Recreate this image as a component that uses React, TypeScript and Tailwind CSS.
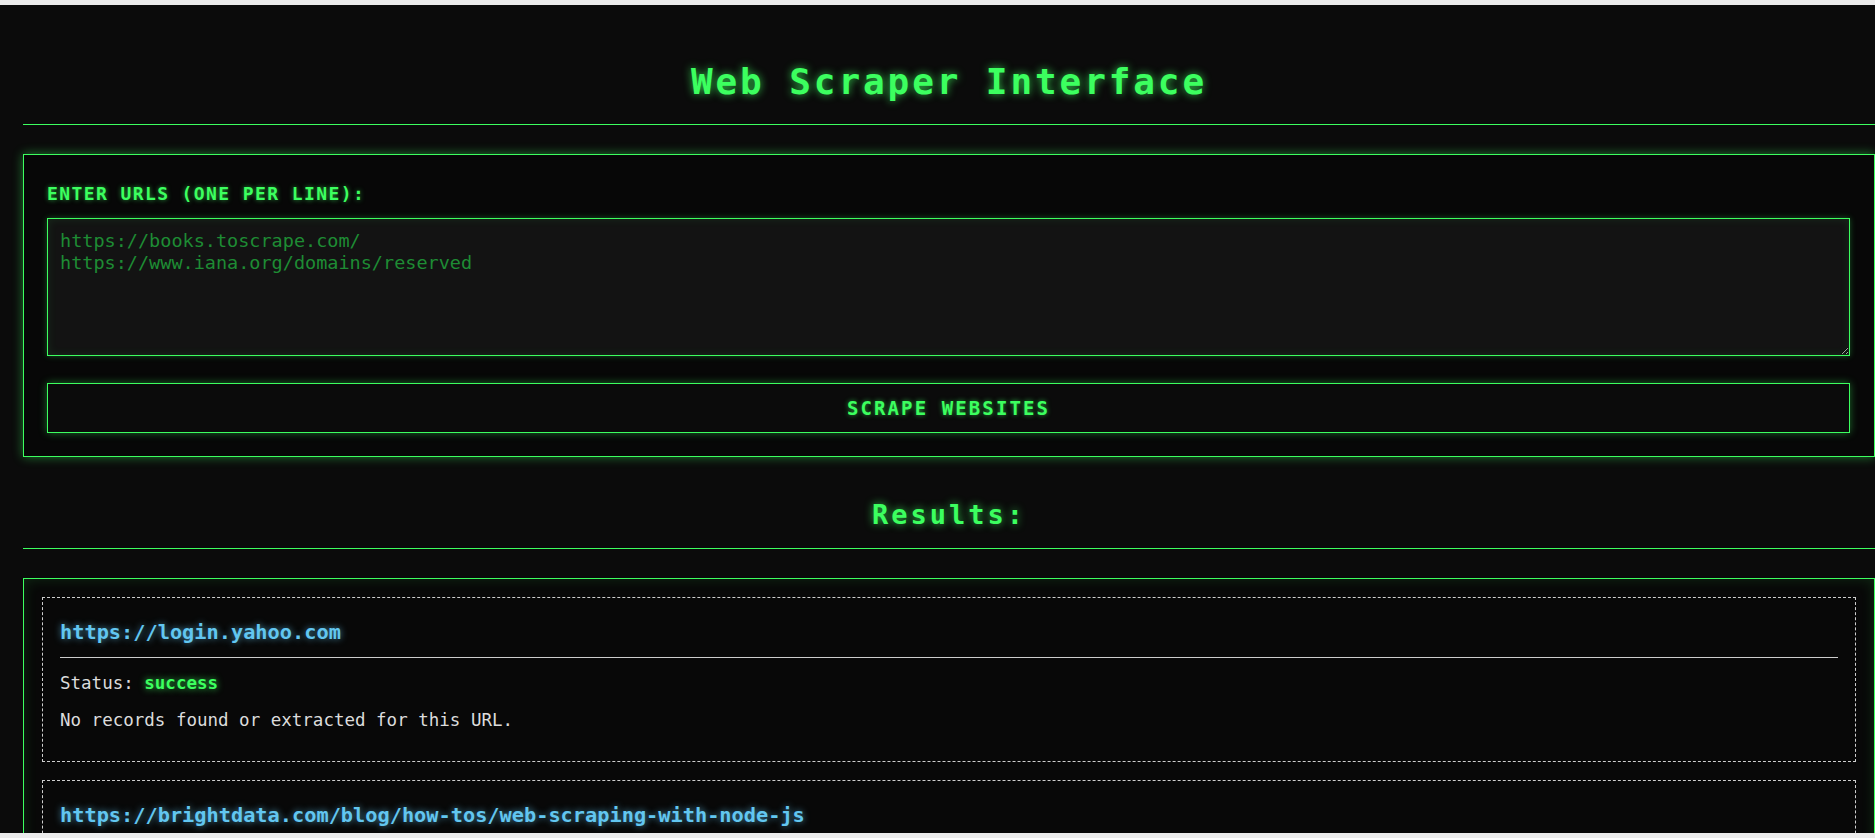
import React, { useState } from 'react';

type Result = {
  url: string;
  status: string;
  records: string[];
};

const results: Result[] = [
  { url: 'https://login.yahoo.com', status: 'success', records: [] },
  { url: 'https://brightdata.com/blog/how-tos/web-scraping-with-node-js', status: 'success', records: [] },
];

const glow = '[text-shadow:0_0_8px_rgba(60,255,95,0.75)]';

const ResultCard: React.FC<{ r: Result; first: boolean }> = ({ r, first }) => (
  <div className={`border border-dashed border-[#cfcfcf] px-[17px] pt-[22px] pb-[30px] ${first ? '' : 'mt-[18px]'}`}>
    <h3 className="text-[20.3px] leading-[24px] font-bold text-[#62c6f0] pb-[13px] border-b border-[#cccccc] [text-shadow:0_0_7px_rgba(98,198,240,0.7)]">{r.url}</h3>
    <p className="mt-[14px] text-[17.5px] leading-[22px] text-[#dcdcdc]">
      Status: <span className="font-bold text-[#3cff5f] [text-shadow:0_0_7px_rgba(60,255,95,0.8)]">{r.status}</span>
    </p>
    {r.records.length === 0
      ? <p className="mt-[15px] text-[17.5px] leading-[22px] text-[#dcdcdc]">No records found or extracted for this URL.</p>
      : r.records.map((rec, i) => <p key={i} className="mt-[15px] text-[17.5px] leading-[22px] text-[#dcdcdc]">{rec}</p>)}
  </div>
);

const App: React.FC = () => {
  const [urls, setUrls] = useState('');

  return (
    <div className="h-screen flex flex-col bg-[#0b0b0b] font-['DejaVu_Sans_Mono',monospace] overflow-hidden">
      <div className="h-[5px] shrink-0 bg-[#ececec]" />
      <div className="flex-1 overflow-hidden pl-[23px]">
        <h1 className={`pt-[55px] pb-[20px] text-center text-[36px] leading-[44px] font-bold tracking-[2.9px] text-[#3cff5f] border-b border-[#3cff5f] ${glow}`}>Web Scraper Interface</h1>

        <div className="mt-[29px] border border-[#3cff5f] bg-[#070707] pt-[28px] pb-[23px] pl-[23px] pr-[24px] shadow-[0_0_10px_rgba(60,255,95,0.45)]">
          <label className="block text-[18px] leading-[22px] font-bold tracking-[1.4px] text-[#3cff5f] mb-[13px] [text-shadow:0_0_5px_rgba(60,255,95,0.6)]">ENTER URLS (ONE PER LINE):</label>
          <textarea
            value={urls}
            onChange={e => setUrls(e.target.value)}
            placeholder={'https://books.toscrape.com/\nhttps://www.iana.org/domains/reserved'}
            className="block w-full h-[138px] border border-[#3cff5f] bg-[#131313] p-[11px] pl-[12px] text-[18.5px] leading-[22px] font-['DejaVu_Sans_Mono',monospace] text-[#3cff5f] placeholder:text-[#1e8c34] outline-none shadow-[0_0_6px_rgba(60,255,95,0.3),inset_0_0_10px_rgba(60,255,95,0.1)]"
          />
          <button className="mt-[27px] block w-full h-[50px] border border-[#3cff5f] bg-[#0b0b0b] text-[19px] font-bold tracking-[2.1px] text-[#3cff5f] shadow-[0_0_8px_rgba(60,255,95,0.4)] [text-shadow:0_0_5px_rgba(60,255,95,0.6)]">SCRAPE WEBSITES</button>
        </div>

        <h2 className={`mt-[42px] pb-[17px] text-center text-[27px] leading-[32px] font-bold tracking-[3px] text-[#3cff5f] border-b border-[#3cff5f] ${glow}`}>Results:</h2>

        <div className="mt-[29px] border border-[#3cff5f] bg-[#080808] p-[18px] shadow-[inset_0_0_14px_rgba(60,255,95,0.14)]">
          {results.map((r, i) => <ResultCard key={r.url} r={r} first={i === 0} />)}
        </div>
      </div>
      <div className="h-[5px] shrink-0 bg-[#ececec]" />
    </div>
  );
};

export default App;
